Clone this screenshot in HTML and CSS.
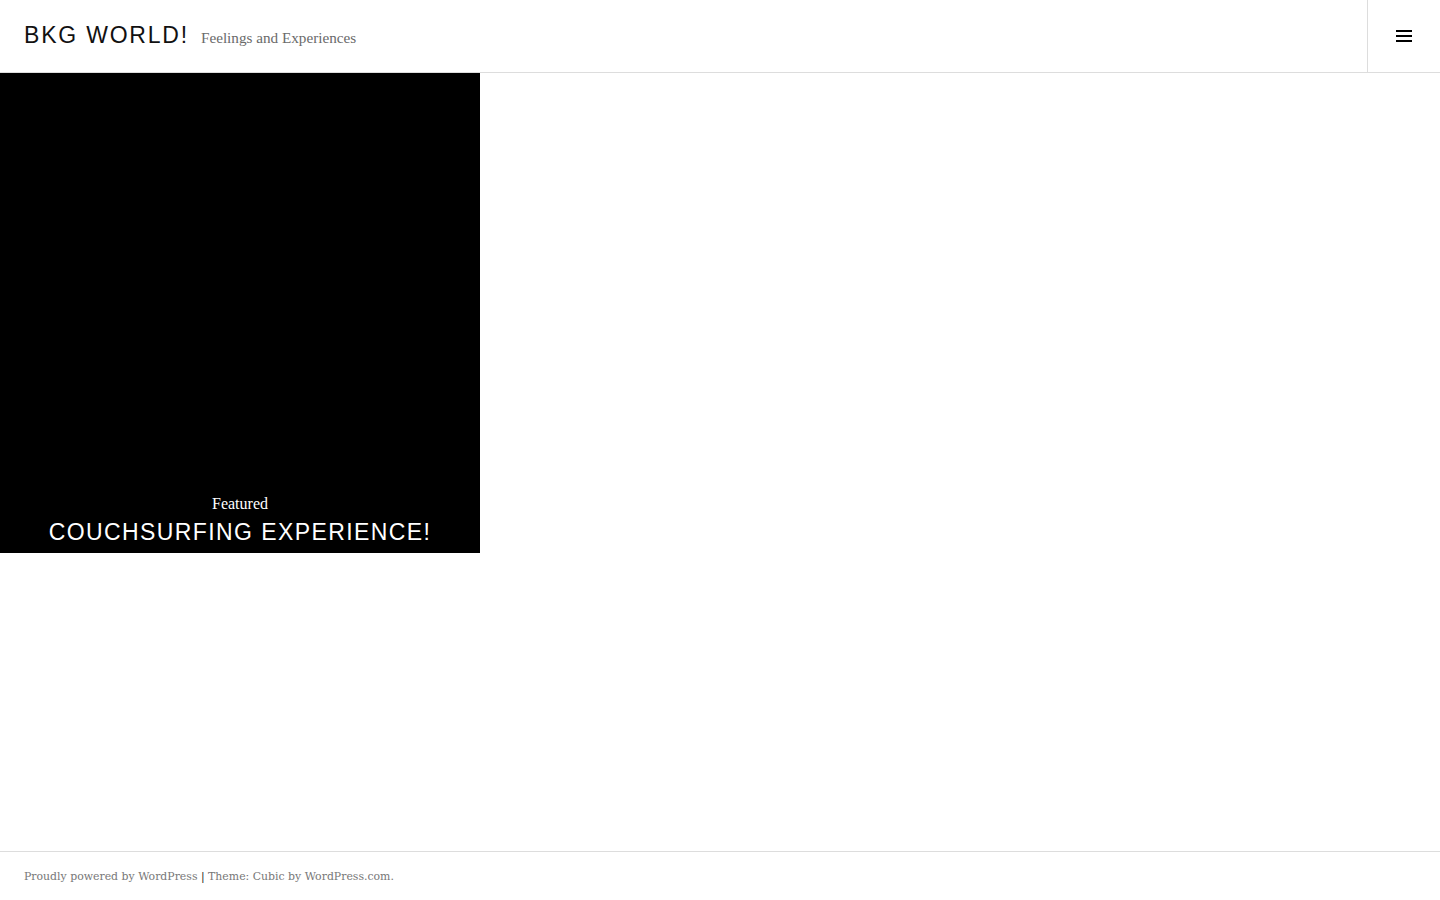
FILE: index.html
```html
<!DOCTYPE html>
<html lang="en">
<head>
<meta charset="utf-8">
<title>BKG WORLD!</title>
<link rel="stylesheet" href="styles.css">
</head>
<body>
<div class="page">
  <header class="site-header">
    <div class="branding">
      <h1 class="site-title">BKG WORLD!</h1>
      <p class="site-description">Feelings and Experiences</p>
    </div>
    <button class="menu-toggle" aria-label="Menu">
      <svg width="16" height="14" viewBox="0 0 16 14"><rect x="0" y="1" width="16" height="2"/><rect x="0" y="6" width="16" height="2"/><rect x="0" y="11" width="16" height="2"/></svg>
    </button>
  </header>
  <main class="site-main">
    <article class="tile">
      <div class="tile-text">
        <span class="tile-label">Featured</span>
        <h2 class="tile-title">COUCHSURFING EXPERIENCE!</h2>
      </div>
    </article>
  </main>
  <footer class="site-footer">
    <p class="site-info">Proudly powered by WordPress <span class="sep">|</span> Theme: Cubic by WordPress.com.</p>
  </footer>
</div>
</body>
</html>
```

FILE: styles.css
```css
html, body { margin: 0; padding: 0; background: #fff; }
.page { min-height: 100vh; display: flex; flex-direction: column; }
.site-header {
  height: 72px;
  border-bottom: 1px solid #ddd;
  display: flex;
  align-items: stretch;
  justify-content: space-between;
}
.branding { display: flex; align-items: baseline; padding-left: 24px; padding-top: 22px; }
.site-title {
  margin: 0;
  font-family: "Liberation Sans", Arial, sans-serif;
  font-weight: 400;
  font-size: 23px;
  letter-spacing: 1.8px;
  color: #111;
}
.site-description {
  margin: 0 0 0 12px;
  font-family: "Liberation Serif", "Times New Roman", serif;
  font-size: 15.2px;
  color: #6a6a6a;
}
.menu-toggle {
  width: 73px;
  border: 0;
  border-left: 1px solid #ddd;
  background: #fff;
  padding: 0;
  display: flex;
  align-items: center;
  justify-content: center;
}
.menu-toggle svg { fill: #000; }
.site-main { flex: 1; }
.tile {
  width: 480px; height: 480px; background: #000;
  display: flex; flex-direction: column; justify-content: flex-end;
}
.tile-text { text-align: center; padding-bottom: 6px; color: #fff; }
.tile-label {
  display: block;
  font-family: "Liberation Serif", "Times New Roman", serif;
  font-size: 16px;
  line-height: 22px;
}
.tile-title {
  margin: 2px 0 0;
  font-family: "Liberation Sans", Arial, sans-serif;
  font-weight: 400;
  font-size: 23px;
  letter-spacing: 1.4px;
  line-height: 30px;
}
.site-footer {
  height: 48px;
  border-top: 1px solid #ddd;
  display: flex;
  align-items: center;
  padding-left: 24px;
}
.site-info {
  margin: 0;
  font-family: "DejaVu Serif", Georgia, serif;
  font-size: 10.9px;
  color: #777;
}
.sep { color: #222; }
```
